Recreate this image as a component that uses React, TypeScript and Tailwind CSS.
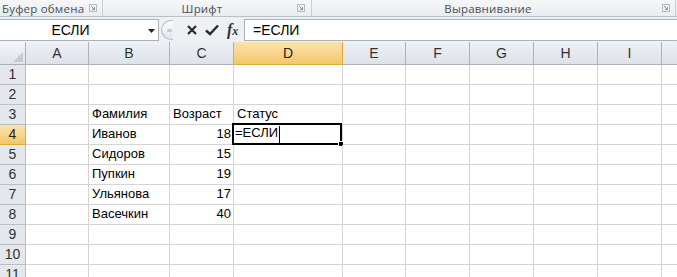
import React from 'react';

const cols = [
  { k: 'A', w: 63 },
  { k: 'B', w: 81 },
  { k: 'C', w: 64 },
  { k: 'D', w: 109 },
  { k: 'E', w: 63 },
  { k: 'F', w: 64 },
  { k: 'G', w: 64 },
  { k: 'H', w: 64 },
  { k: 'I', w: 64 },
  { k: '', w: 40 },
];

const data: Record<number, { b?: string; c?: string; d?: string }> = {
  3: { b: 'Фамилия', c: 'Возраст', d: 'Статус' },
  4: { b: 'Иванов', c: '18' },
  5: { b: 'Сидоров', c: '15' },
  6: { b: 'Пупкин', c: '19' },
  7: { b: 'Ульянова', c: '17' },
  8: { b: 'Васечкин', c: '40' },
};

const rows = [1, 2, 3, 4, 5, 6, 7, 8, 9, 10, 11];

function Launcher() {
  return (
    <svg width="8" height="8" viewBox="0 0 8 8" className="shrink-0">
      <rect x="0.5" y="0.5" width="7" height="7" fill="none" stroke="#b4bac2" />
      <path d="M2 2 L5.5 5.5 M5.5 3 V5.5 H3" stroke="#8d949c" fill="none" />
    </svg>
  );
}

export default function App() {
  return (
    <div className="w-[677px] h-[277px] overflow-hidden bg-white font-['Liberation_Sans',Arial,sans-serif]">
      {/* ribbon group captions */}
      <div className="h-[17px] flex bg-gradient-to-b from-[#f6f7f9] to-[#e9ecf0] border-b border-[#b9c0c9] text-[11.5px] leading-[15px] text-[#4a4f55] font-['Open_Sans',sans-serif] tracking-[0.2px] whitespace-nowrap">
        <div className="w-[103px] flex items-center pl-[2px] pr-[5px] border-r border-[#c9ced5]">
          <span className="flex-1">Буфер обмена</span>
          <Launcher />
        </div>
        <div className="w-[209px] flex items-center pr-[6px] border-r border-[#c9ced5]">
          <span className="flex-1 text-center pl-[4px]">Шрифт</span>
          <Launcher />
        </div>
        <div className="w-[364px] flex items-center pr-[5px] border-r border-[#c9ced5]">
          <span className="flex-1 text-center pl-[2px]">Выравнивание</span>
          <Launcher />
        </div>
      </div>

      {/* formula bar */}
      <div className="h-[25px] flex items-stretch bg-[#eef1f4] pt-[2px] pb-[1px]">
        <div className="w-[159px] relative bg-white border-y border-r border-[#a9b1bb] flex items-center">
          <span className="w-[141px] text-center text-[14px] text-black">ЕСЛИ</span>
          <svg width="7" height="4" viewBox="0 0 7 4" className="absolute left-[148px] top-[9px]">
            <path d="M0 0 H7 L3.5 4 Z" fill="#222" />
          </svg>
        </div>
        <div className="w-[85px] flex items-center pl-[2px]">
          <div className="w-[12px] h-[20px] rounded-l-full border border-r-0 border-[#b5bcc5] bg-gradient-to-b from-[#fbfcfd] to-[#e2e6eb] flex items-center justify-end pr-[1px]">
            <div className="w-[5px] h-[3px] rounded-full bg-[#c3c9d0]" />
          </div>
          <svg width="12" height="12" viewBox="0 0 12 12" className="ml-[13px]">
            <path d="M2 2 L10 10 M10 2 L2 10" stroke="#2b2b2b" strokeWidth="2.2" />
          </svg>
          <svg width="14" height="12" viewBox="0 0 14 12" className="ml-[7px]">
            <path d="M1 6.5 L5 10 L13 1.5" stroke="#2b2b2b" strokeWidth="2.4" fill="none" />
          </svg>
          <span className="ml-[8px] font-['Liberation_Serif',serif] italic font-bold text-[16px] text-[#333] leading-none">
            f<span className="text-[12px]">x</span>
          </span>
        </div>
        <div className="flex-1 bg-white border-y border-l border-[#a9b1bb] flex items-center pl-[8px] text-[14px] text-black">
          =ЕСЛИ
        </div>
      </div>

      {/* sheet */}
      <div className="flex flex-col text-[13px] text-black">
        <div className="flex h-[23px]">
          <div className="w-[26px] shrink-0 relative bg-gradient-to-b from-[#f3f5f8] to-[#dfe4ea] border-r border-b border-[#a6b0bc]">
            <svg width="10" height="10" viewBox="0 0 10 10" className="absolute right-[2px] bottom-[2px]">
              <path d="M10 0 V10 H0 Z" fill="#c5ccd4" />
            </svg>
          </div>
          {cols.map((c) => (
            <div
              key={c.k}
              style={{ width: c.w }}
              className={`shrink-0 flex items-center justify-center border-r border-b text-[14px] ${
                c.k === 'D'
                  ? 'bg-gradient-to-b from-[#fbe3ad] to-[#f4c767] border-[#e1a93d] text-[#222]'
                  : 'bg-gradient-to-b from-[#eef1f5] to-[#dde2e8] border-[#a9b3bf] text-[#333]'
              }`}
            >
              {c.k}
            </div>
          ))}
        </div>
        {rows.map((r) => {
          const d = data[r] || {};
          return (
            <div key={r} className="flex h-[20px]">
              <div
                className={`w-[26px] shrink-0 flex items-center justify-center border-r border-b text-[14px] ${
                  r === 4
                    ? 'bg-gradient-to-b from-[#fbe3ad] to-[#f4c767] border-[#e1a93d] text-[#222]'
                    : 'bg-[#e4e8ed] border-[#b6bec8] text-[#333]'
                }`}
              >
                {r}
              </div>
              {cols.map((c) => {
                let content: React.ReactNode = null;
                let align = 'justify-start pl-[3px]';
                if (c.k === 'B') content = d.b;
                if (c.k === 'C') {
                  content = d.c;
                  if (r !== 3) align = 'justify-end pr-[2px]';
                }
                if (c.k === 'D') content = d.d;
                const active = c.k === 'D' && r === 4;
                return (
                  <div
                    key={c.k}
                    style={{ width: c.w }}
                    className={`shrink-0 relative flex items-end pb-[1px] border-r border-b border-[#d4d4d4] ${align}`}
                  >
                    {content}
                    {active && (
                      <div className="absolute left-[-2px] top-[-2px] w-[110px] h-[22px] border-2 border-black bg-white flex items-end pb-[1px] pl-[1px]">
                        <span>=ЕСЛИ</span>
                        <span className="w-[1px] h-[17px] bg-black ml-[1px] mb-[-1px]" />
                        <span className="absolute right-[-4px] bottom-[-4px] w-[6px] h-[6px] bg-black border border-white" />
                      </div>
                    )}
                  </div>
                );
              })}
            </div>
          );
        })}
      </div>
    </div>
  );
}
